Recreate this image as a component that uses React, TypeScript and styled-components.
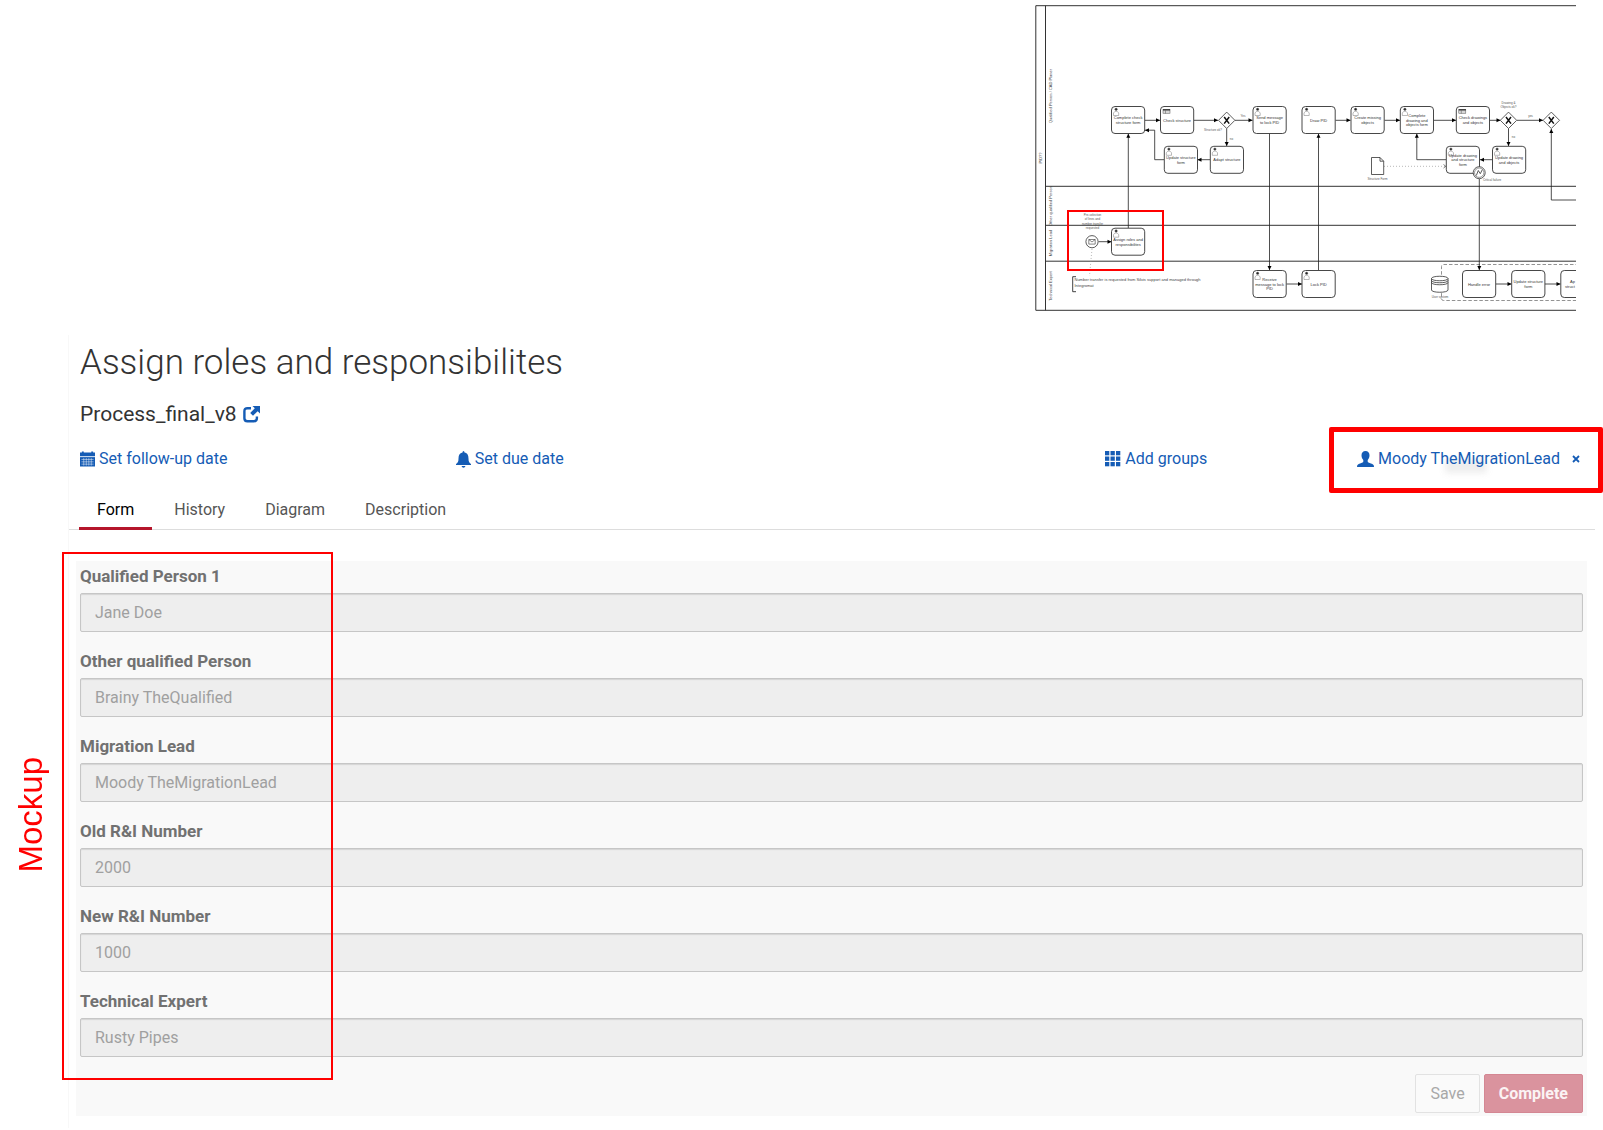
import React from "react";
import styled, { createGlobalStyle } from "styled-components";

const GlobalStyle = createGlobalStyle`
  *, *::before, *::after { box-sizing: border-box; }
  body {
    margin: 0;
    background: #fff;
    color: #333;
    font-family: Roboto, "Liberation Sans", sans-serif;
    font-size: 16px;
    line-height: 24px;
  }
`;

const Page = styled.div`
  display: flex;
  flex-direction: column;
`;

const DiagramBar = styled.header`
  display: flex;
  justify-content: flex-end;
  padding: 4px 27px 23px 0;
`;

const DiagramSvg = styled.svg`
  display: block;
  width: 542px;
  height: 308px;
  font-family: "Liberation Sans", sans-serif;
  font-size: 4px;
`;

const Body = styled.div`
  display: grid;
  grid-template-columns: 68px minmax(0, 1fr);
`;

const MockupRail = styled.aside`
  display: flex;
  align-items: flex-start;
  justify-content: flex-start;
  padding: 422px 0 0 13px;
`;

const MockupLabel = styled.span`
  writing-mode: vertical-rl;
  transform: rotate(180deg);
  font-family: "Liberation Sans", sans-serif;
  font-size: 33px;
  line-height: 36px;
  color: #f00;
`;

const Panel = styled.main`
  border-left: 1px solid #f8f8f8;
  padding-right: 8px;
  padding-bottom: 12px;
`;

const Heading = styled.div`
  padding: 0 12px 0 11px;
`;

const Title = styled.h1`
  margin: 0;
  padding-top: 6px;
  font-size: 35px;
  line-height: 44px;
  font-weight: 300;
`;

const ProcessName = styled.h2`
  display: flex;
  align-items: center;
  gap: 6px;
  margin: 15px 0 0;
  font-size: 21px;
  line-height: 28px;
  font-weight: 400;
`;

const IconLink = styled.a`
  display: flex;
  color: #155cb5;
`;

const MetaRow = styled.div`
  display: grid;
  grid-template-columns: repeat(4, minmax(0, 1fr));
  margin-top: 19px;
`;

const MetaCell = styled.div<{ $end?: boolean }>`
  position: relative;
  display: flex;
  justify-content: ${(p) => (p.$end ? "flex-end" : "flex-start")};
`;

const MetaButton = styled.button`
  display: flex;
  align-items: center;
  gap: 4px;
  padding: 0;
  border: 0;
  background: none;
  font: inherit;
  color: #155cb5;
  white-space: nowrap;
`;

const RemoveButton = styled(MetaButton)`
  padding: 0 3px 0 12px;
`;

const Smudge = styled.span`
  position: absolute;
  right: 96px;
  top: 12px;
  width: 42px;
  height: 14px;
  background: #eee;
  filter: blur(3px);
  z-index: -1;
`;

const AssigneeFrame = styled.span`
  position: absolute;
  top: -20px;
  right: -20px;
  width: 274px;
  height: 66px;
  border: 5px solid #f00;
  border-radius: 2px;
  pointer-events: none;
`;

const Tabs = styled.nav`
  display: flex;
  margin-top: 17px;
  padding-left: 10px;
  border-bottom: 1px solid #ddd;
`;

const Tab = styled.button<{ $active?: boolean }>`
  margin: 0 4px -1px 0;
  padding: 10px 18px 5px;
  border: 0;
  border-bottom: 3px solid ${(p) => (p.$active ? "#b5152b" : "transparent")};
  background: none;
  font: inherit;
  color: ${(p) => (p.$active ? "#000" : "#555")};
`;

const FormArea = styled.form`
  position: relative;
  margin: 31px 8px 0 7px;
  padding: 3px 4px 3px 4px;
  background: #f9f9f9;
`;

const Field = styled.div`
  display: flex;
  flex-direction: column;
  gap: 5px;
  margin-bottom: 17px;
`;

const Label = styled.label`
  font-size: 17px;
  font-weight: 700;
  color: #717171;
`;

const Input = styled.input`
  width: 100%;
  height: 39px;
  padding: 0 14px;
  border: 1px solid #c6c6c6;
  border-radius: 2px;
  background: #eee;
  box-shadow: inset 0 1px 1px #d4d4d4;
  font: inherit;
  color: #a0a0a0;
`;

const Actions = styled.div`
  display: flex;
  justify-content: flex-end;
  gap: 4px;
`;

const ActionButton = styled.button<{ $primary?: boolean }>`
  height: 39px;
  padding: 0 14px;
  border: 1px solid ${(p) => (p.$primary ? "#d48793" : "#e2e2e2")};
  border-radius: 2px;
  background: ${(p) => (p.$primary ? "#da939e" : "#fafafa")};
  font: inherit;
  font-weight: ${(p) => (p.$primary ? 700 : 400)};
  color: ${(p) => (p.$primary ? "#fbf3f4" : "#a8a8a8")};
`;

const FormFrame = styled.span`
  position: absolute;
  top: -9px;
  left: -14px;
  width: 271px;
  height: 528px;
  border: 2px solid #f00;
  pointer-events: none;
`;

type Kind = "user" | "rule" | "plain";
const tasks: { x: number; y: number; kind: Kind; lines: string[] }[] = [
  { x: 1111.5, y: 106.5, kind: "user", lines: ["Complete check", "structure form"] },
  { x: 1160.5, y: 106.5, kind: "rule", lines: ["Check structure"] },
  { x: 1253, y: 106.5, kind: "user", lines: ["Send message", "to lock PID"] },
  { x: 1302, y: 106.5, kind: "user", lines: ["Draw PID"] },
  { x: 1351, y: 106.5, kind: "user", lines: ["Create missing", "objects"] },
  { x: 1400.3, y: 106.5, kind: "user", lines: ["Complete", "drawing and", "objects form"] },
  { x: 1456.3, y: 106.5, kind: "rule", lines: ["Check drawings", "and objects"] },
  { x: 1164.3, y: 146.3, kind: "user", lines: ["Update structure", "form"] },
  { x: 1210.3, y: 146.3, kind: "user", lines: ["Adapt structure"] },
  { x: 1446.3, y: 146.3, kind: "user", lines: ["Update drawing", "and structure", "form"] },
  { x: 1492.5, y: 146.3, kind: "user", lines: ["Update drawing", "and objects"] },
  { x: 1111.5, y: 228.2, kind: "user", lines: ["Assign roles and", "responsibilites"] },
  { x: 1253, y: 270.5, kind: "user", lines: ["Receive", "message to lock", "PID"] },
  { x: 1302, y: 270.5, kind: "user", lines: ["Lock PID"] },
  { x: 1462.5, y: 270.5, kind: "plain", lines: ["Handle error"] },
  { x: 1511.7, y: 270.5, kind: "plain", lines: ["Update structure", "form"] },
];

const flows = [
  "M1145 120.3H1160", "M1194 120.3H1218", "M1235 120.3H1252.5", "M1335.5 120.3H1350.5",
  "M1384.5 120.3H1400", "M1434 120.3H1456", "M1489.5 120.3H1500.5", "M1517 120.3H1543",
  "M1226.7 128.5V146", "M1508.5 128.5V146", "M1210 159.7H1197.5", "M1492.5 159.7H1480",
  "M1164 159.7H1154.7V130.2H1145", "M1446 159.7H1416.8V133.8", "M1128.3 228V133.8",
  "M1269.5 133.5V270", "M1318.5 270V133.8", "M1479.3 179V270", "M1590 200H1551.3V129",
  "M1098.5 241.7H1111.5", "M1286.5 284H1302", "M1496 284H1511.5", "M1545 284H1560.5",
];

const labels: { x: number; y: number; lines: string[] }[] = [
  { x: 1213, y: 131, lines: ["Structure ok?"] },
  { x: 1243, y: 117, lines: ["Yes"] },
  { x: 1231.5, y: 140, lines: ["no"] },
  { x: 1508.5, y: 104, lines: ["Drawing &", "Objects ok?"] },
  { x: 1530.5, y: 117, lines: ["yes"] },
  { x: 1513.5, y: 138, lines: ["no"] },
  { x: 1377.5, y: 180, lines: ["Structure Form"] },
  { x: 1492, y: 181, lines: ["Critical failure"] },
  { x: 1092.5, y: 216, lines: ["Pre-selection", "of lines and", "number transfer", "requested"] },
  { x: 1440, y: 298, lines: ["User system"] },
];

const lanes = [
  { x: 1041.5, y: 158, text: "PID??" },
  { x: 1051.5, y: 96, text: "Qualified Person / CAD Planer" },
  { x: 1051.5, y: 206, text: "Other qualified Person" },
  { x: 1051.5, y: 243, text: "Migration Lead" },
  { x: 1051.5, y: 286, text: "Technical Expert" },
];

function Task({ x, y, kind, lines }: (typeof tasks)[number]) {
  return (
    <g>
      <rect x={x} y={y} width="33.2" height="27" rx="3.5" fill="#fff" stroke="#333" strokeWidth="0.9" />
      {kind === "user" && (
        <g fill="none" stroke="#777" strokeWidth="0.5">
          <path d={`M${x + 2} ${y + 9}V${y + 6.5}l1.5-1.7h2.2l1.5 1.7V${y + 9}z`} />
          <circle cx={x + 4.6} cy={y + 2.8} r="1.2" fill="#222" />
        </g>
      )}
      {kind === "rule" && (
        <g stroke="#555" strokeWidth="0.5" fill="none">
          <rect x={x + 2.5} y={y + 3} width="7" height="4.2" />
          <path d={`M${x + 2.5} ${y + 5.5}h7M${x + 5} ${y + 4}v3`} />
          <path d={`M${x + 2.5} ${y + 3.4}h7`} stroke="#222" strokeWidth="1.3" />
        </g>
      )}
      {lines.map((line, i) => (
        <text key={line} x={x + 16.6} y={y + 15 + (i - (lines.length - 1) / 2) * 4.7} textAnchor="middle" fill="#333">
          {line}
        </text>
      ))}
    </g>
  );
}

function Gateway({ x }: { x: number }) {
  return (
    <g stroke="#333">
      <path d={`M${x} 112.1l8.2 8.2-8.2 8.2-8.2-8.2z`} fill="#fff" strokeWidth="0.8" />
      <path d={`M${x - 2.5} 117l5 6.6m0-6.6l-5 6.6`} stroke="#111" strokeWidth="1.5" />
    </g>
  );
}

function ProcessDiagram() {
  return (
    <DiagramSvg viewBox="1034 4 542 308" role="img" aria-label="Process diagram">
      <defs>
        <marker id="arrow" markerUnits="userSpaceOnUse" markerWidth="5" markerHeight="5" refX="4.5" refY="2.5" orient="auto">
          <path d="M0.5 0.5L4.5 2.5L0.5 4.5z" fill="#000" />
        </marker>
      </defs>
      <g fill="none" stroke="#333">
        <path d="M1590 5.7H1035.8V310.3H1590M1045.5 5.7V310.3" />
        <path d="M1045.5 186.3H1590M1045.5 225.3H1590M1045.5 261.2H1590" />
      </g>
      {lanes.map((l) => (
        <text key={l.text} textAnchor="middle" fill="#444" transform={`translate(${l.x} ${l.y}) rotate(-90)`}>
          {l.text}
        </text>
      ))}
      <path d="M1590 264.5H1443.5Q1441.5 264.5 1441.5 266.5V298.5Q1441.5 300.5 1443.5 300.5H1590" fill="none" stroke="#777" strokeWidth="0.8" strokeDasharray="3.5 2" />
      <g fill="none" stroke="#222" strokeWidth="0.8">
        {flows.map((d) => <path key={d} d={d} markerEnd="url(#arrow)" />)}
      </g>
      <path d="M1384 166.3H1445M1092 249L1089.5 276" fill="none" stroke="#888" strokeWidth="0.6" strokeDasharray="1 2" />
      <path d="M1443.5 164.5l2.3 1.8-2.3 1.8" fill="none" stroke="#333" strokeWidth="0.6" />
      {tasks.map((t) => <Task key={`${t.x}-${t.y}`} {...t} />)}
      <path d="M1590 270.5H1564.300Q1560.800 270.500 1560.800 274V294Q1560.800 297.500 1564.300 297.500H1590" fill="#fff" stroke="#333" strokeWidth="0.9" />
      <text x="1570" y="283" fill="#333">Ap</text>
      <text x="1565" y="287.700" fill="#333">struct</text>
      <Gateway x={1226.7} />
      <Gateway x={1508.5} />
      <Gateway x={1551.3} />
      <g fill="#fff" stroke="#333" strokeWidth="0.8">
        <path d="M1371.5 157.5h8.5l3.7 3.7v13.3h-12.2zM1380 157.5v3.7h3.7" />
        <circle cx="1479.2" cy="172.7" r="6" />
        <circle cx="1479.2" cy="172.7" r="4.7" strokeWidth="0.5" />
        <path d="M1476.3 175.5l2-5 2 3.2 2-4" fill="none" />
        <circle cx="1092" cy="241.7" r="6.1" />
        <path d="M1088.8 239.5h6.4v4.6h-6.4zl3.2 2.5 3.2-2.5" strokeWidth="0.6" />
        <path d="M1431.5 278.5v11.5c0 3 16.5 3 16.5 0v-11.5c0-3-16.5-3-16.5 0c0 3 16.5 3 16.5 0M1431.5 280.5c0 3 16.5 3 16.5 0M1431.5 282.5c0 3 16.5 3 16.5 0" />
        <path d="M1076 276.7h-3.3v15h3.3" fill="none" stroke="#111" />
      </g>
      {labels.map((l) =>
        l.lines.map((line, i) => (
          <text key={`${l.x}-${line}`} x={l.x} y={l.y + i * 4.3} fontSize="3" textAnchor="middle" fill="#555">
            {line}
          </text>
        )),
      )}
      <text x="1074.5" y="281.3" fill="#444">Number transfer is requested from Silvis support and managed through</text>
      <text x="1074.5" y="286.8" fill="#444">Integromat</text>
      <rect x="1068" y="211" width="95" height="59" fill="none" stroke="#f00" strokeWidth="2" />
    </DiagramSvg>
  );
}

const ShareIcon = () => (
  <svg width="17" height="17" viewBox="0 0 17 17" fill="#155cb5" aria-hidden="true">
    <path d="M9.500 0H17v7.500l-2.300-2.300-4.700 4.600-2.800-2.800L11.800 2.300z" />
    <path d="M8 2.200H4.500Q1.400 2.200 1.400 5.200v7q0 3 3 3h6.500q3 0 3-3V10.500" fill="none" stroke="#155cb5" strokeWidth="2.400" />
  </svg>
);

const CalendarIcon = () => (
  <svg width="15" height="16" viewBox="0 0 16 16" fill="#155cb5" aria-hidden="true">
    <path d="M0 1h2V0h2v1h8V0h2v1h2v4H0z" />
    <path d="M0 6h16v10H0z" />
    <path d="M1.500 8.500h13M1.500 11h13M1.500 13.500h13M4 7v8M6.700 7v8M9.400 7v8M12 7v8" stroke="#fff" strokeWidth="0.500" />
  </svg>
);

const BellIcon = () => (
  <svg width="15" height="17" viewBox="0 0 15 17" fill="#155cb5" aria-hidden="true">
    <path d="M7.500 0q1 0 1 1.500c3 .5 4 3 4 6 0 3 .5 4 2.500 5.500v1H0v-1C2 11.500 2.500 10.500 2.500 7.500c0-3 1-5.500 4-6Q6.500 0 7.500 0zM5.500 15h4q-.5 1.700-2 1.700T5.500 15z" />
  </svg>
);

const GridIcon = () => (
  <svg width="16" height="16" viewBox="0 0 16 16" fill="#155cb5" aria-hidden="true">
    {[0, 5.5, 11].map((y) => [0, 5.5, 11].map((x) => <rect key={`${x}-${y}`} x={x} y={y} width="4.300" height="4.300" />))}
  </svg>
);

const UserIcon = () => (
  <svg width="17" height="16" viewBox="0 0 17 16" fill="#155cb5" aria-hidden="true">
    <path d="M8.500 0c2.500 0 4 1.700 4 4.300 0 2-.7 3.600-1.800 4.700v1.400c0 1 1.300 1.300 3.300 2 2 .7 3 1.200 3 3.600H0c0-2.400 1-2.900 3-3.600s3.300-1 3.300-2V9C5.200 7.900 4.500 6.300 4.500 4.300 4.500 1.700 6 0 8.500 0z" />
  </svg>
);

const CrossIcon = () => (
  <svg width="8" height="8" viewBox="0 0 8 8" aria-hidden="true">
    <path d="M1 1l6 6M7 1L1 7" stroke="#155cb5" strokeWidth="1.800" />
  </svg>
);

const fields = [
  { id: "qualified", label: "Qualified Person 1", value: "Jane Doe" },
  { id: "other", label: "Other qualified Person", value: "Brainy TheQualified" },
  { id: "lead", label: "Migration Lead", value: "Moody TheMigrationLead" },
  { id: "old-number", label: "Old R&I Number", value: "2000" },
  { id: "new-number", label: "New R&I Number", value: "1000" },
  { id: "expert", label: "Technical Expert", value: "Rusty Pipes" },
];

export default function App() {
  return (
    <Page>
      <GlobalStyle />
      <DiagramBar>
        <ProcessDiagram />
      </DiagramBar>
      <Body>
        <MockupRail>
          <MockupLabel>Mockup</MockupLabel>
        </MockupRail>
        <Panel>
          <Heading>
            <Title>Assign roles and responsibilites</Title>
            <ProcessName>
              Process_final_v8
              <IconLink href="#process" aria-label="Open process"><ShareIcon /></IconLink>
            </ProcessName>
            <MetaRow>
              <MetaCell><MetaButton><CalendarIcon />Set follow-up date</MetaButton></MetaCell>
              <MetaCell><MetaButton><BellIcon />Set due date</MetaButton></MetaCell>
              <MetaCell $end><MetaButton><GridIcon />Add groups</MetaButton></MetaCell>
              <MetaCell $end>
                <Smudge />
                <MetaButton><UserIcon />Moody TheMigrationLead</MetaButton>
                <RemoveButton aria-label="Remove assignee"><CrossIcon /></RemoveButton>
                <AssigneeFrame />
              </MetaCell>
            </MetaRow>
          </Heading>
          <Tabs>
            {["Form", "History", "Diagram", "Description"].map((name, i) => (
              <Tab key={name} $active={i === 0}>{name}</Tab>
            ))}
          </Tabs>
          <FormArea>
            {fields.map((f) => (
              <Field key={f.id}>
                <Label htmlFor={f.id}>{f.label}</Label>
                <Input id={f.id} defaultValue={f.value} disabled />
              </Field>
            ))}
            <Actions>
              <ActionButton type="button" disabled>Save</ActionButton>
              <ActionButton type="submit" disabled $primary>Complete</ActionButton>
            </Actions>
            <FormFrame />
          </FormArea>
        </Panel>
      </Body>
    </Page>
  );
}
